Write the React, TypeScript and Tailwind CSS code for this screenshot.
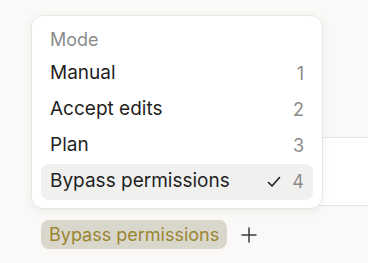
import { Plus } from "lucide-react";

const MODES = [
  { label: "Manual", key: "1" },
  { label: "Accept edits", key: "2" },
  { label: "Plan", key: "3" },
  { label: "Bypass permissions", key: "4", active: true },
];

function ModeMenu() {
  return (
    <div className="absolute left-[31px] top-[15px] w-[292px] rounded-[12px] border border-[#e9e7e2] bg-white px-[9px] pt-[8px] pb-[8px] shadow-[0_2px_10px_rgba(0,0,0,0.06)]">
      <div className="flex h-[32px] items-center px-[9px] pb-[1px] text-[18px] text-[#8b8b8b]">
        Mode
      </div>
      {MODES.map((m) => (
        <div
          key={m.key}
          className={`flex h-[36px] items-center rounded-[8px] px-[9px] pb-[1px] text-[19px] ${
            m.active ? "bg-[#f0f0ef]" : ""
          }`}
        >
          <span className="flex-1 text-[#1f1f1f]">{m.label}</span>
          {m.active && (
            <svg
              width="14"
              height="12"
              viewBox="0 0 14 12"
              fill="none"
              className="mr-[11px]"
            >
              <path
                d="M1.5 6.5 L5 10 L12.5 1.5"
                stroke="#1f1f1f"
                strokeWidth="1.6"
                strokeLinecap="round"
                strokeLinejoin="round"
              />
            </svg>
          )}
          <span className="text-[18px] text-[#8b8b8b]">{m.key}</span>
        </div>
      ))}
    </div>
  );
}

export default function App() {
  return (
    <div
      className="relative h-[263px] w-[368px] overflow-hidden bg-[#faf9f7]"
      style={{ fontFamily: "Inter, 'Noto Sans', sans-serif" }}
    >
      <div className="pt-[137px]">
        <div className="ml-[60px] h-[69px] w-[400px] rounded-l-[14px] border border-[#e6e4df] bg-white" />
        <div className="mt-[14px] flex items-center pl-[41px]">
          <span className="flex h-[29px] items-center rounded-[8px] bg-[#d9d7cc] px-[8px] text-[18px] text-[#9b8630]">
            Bypass permissions
          </span>
          <Plus className="ml-[10px] h-[24px] w-[24px] text-[#3a3a3a]" strokeWidth={1.5} />
        </div>
      </div>
      <ModeMenu />
    </div>
  );
}
